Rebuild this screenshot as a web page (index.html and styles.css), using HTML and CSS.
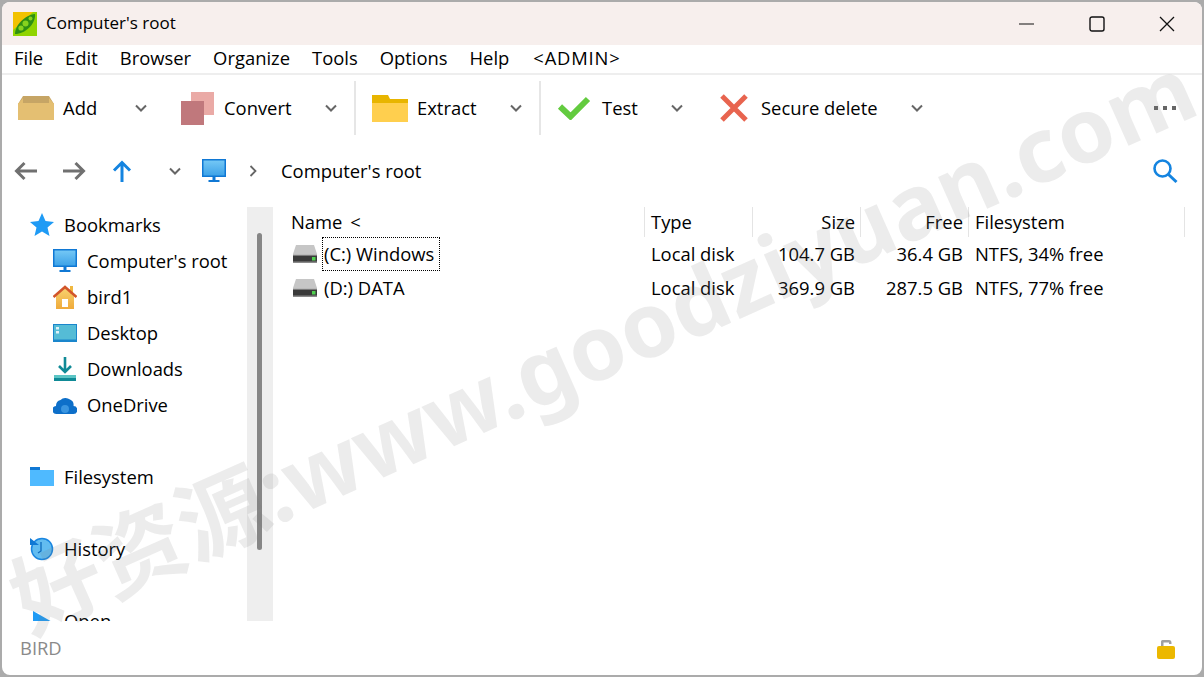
FILE: index.html
```html
<!DOCTYPE html>
<html lang="en">
<head>
<meta charset="utf-8">
<title>Computer's root</title>
<link rel="stylesheet" href="styles.css">
</head>
<body>
<svg class="defs" width="0" height="0" aria-hidden="true">
  <defs>
    <linearGradient id="screen" x1="0" y1="0" x2="0" y2="1"><stop offset="0" stop-color="#74c7f5"/><stop offset="1" stop-color="#3ea3e8"/></linearGradient>
    <linearGradient id="home" x1="0" y1="0" x2="0" y2="1"><stop offset="0" stop-color="#f8d270"/><stop offset="1" stop-color="#efaa3a"/></linearGradient>
    <symbol id="pc" viewBox="0 0 24 24">
      <rect x="0" y="0" width="24" height="18" fill="#1078d4"/>
      <rect x="1.5" y="1.5" width="21" height="15" fill="url(#screen)"/>
      <rect x="10.5" y="18" width="3" height="4" fill="#1078d4"/>
      <rect x="6.5" y="21" width="11" height="2" fill="#1078d4"/>
    </symbol>
    <symbol id="chev" viewBox="0 0 12 8">
      <path d="M1 1.500 6 6.500 11 1.500" fill="none" stroke="#666" stroke-width="2"/>
    </symbol>
    <symbol id="disk" viewBox="0 0 24 18">
      <path d="M3 0H21L24 9H0Z" fill="#c6c6c6"/>
      <rect x="0" y="9" width="24" height="9" fill="#3a3a3a"/>
      <rect x="0" y="9" width="24" height="1.5" fill="#bbb"/>
      <rect x="0" y="16.5" width="24" height="1.5" fill="#8a8a8a"/>
      <rect x="19" y="12" width="3.5" height="3.5" fill="#4fd04f"/>
    </symbol>
  </defs>
</svg>
<div class="window">
  <header class="titlebar">
    <svg class="logo" width="24" height="24" viewBox="0 0 24 24">
      <rect width="24" height="24" fill="#8fd400"/>
      <path d="M0 0H20L0 18Z" fill="#f2c200"/>
      <path d="M2 22C2 13 12 3 22 2 23 12 12 22 2 22Z" fill="#2f8f12"/>
      <circle cx="8" cy="16" r="2.6" fill="#86d21e"/>
      <circle cx="12.500" cy="11.500" r="3" fill="#86d21e"/>
      <circle cx="17.500" cy="6.500" r="2" fill="#86d21e"/>
    </svg>
    <span class="title-text">Computer's root</span>
    <div class="caption">
      <span class="cap-btn"><svg width="16" height="16" viewBox="0 0 16 16"><path d="M0 8H15" stroke="#111" stroke-width="1.2"/></svg></span>
      <span class="cap-btn"><svg width="16" height="16" viewBox="0 0 16 16"><rect x="1" y="1" width="14" height="14" rx="2" fill="none" stroke="#111" stroke-width="1.400"/></svg></span>
      <span class="cap-btn"><svg width="16" height="16" viewBox="0 0 16 16"><path d="M1 1 15 15M15 1 1 15" stroke="#111" stroke-width="1.300"/></svg></span>
    </div>
  </header>

  <nav class="menubar">
    <span>File</span><span>Edit</span><span>Browser</span><span>Organize</span><span>Tools</span><span>Options</span><span>Help</span><span class="admin">&lt;ADMIN&gt;</span>
  </nav>

  <div class="toolbar">
    <div class="tool tool-add">
      <svg class="tool-icon" width="36" height="24" viewBox="0 0 36 24"><path d="M5 0H31L36 8H0Z" fill="#c6a565"/><path d="M0 8 5 2V8ZM36 8 31 2V8Z" fill="#e2bd70"/><rect y="7" width="36" height="17" fill="#e4bf72"/></svg>
      <span class="tool-label">Add</span>
      <svg class="chev" width="12" height="8"><use href="#chev"/></svg>
    </div>
    <div class="tool tool-convert">
      <svg class="tool-icon" width="33" height="33" viewBox="0 0 33 33"><rect x="10" y="0" width="23" height="23" fill="#eaaaa6"/><rect x="0" y="9" width="23" height="24" fill="#c0787c"/></svg>
      <span class="tool-label">Convert</span>
      <svg class="chev" width="12" height="8"><use href="#chev"/></svg>
    </div>
    <i class="tool-sep"></i>
    <div class="tool tool-extract">
      <svg class="tool-icon" width="36" height="27" viewBox="0 0 36 27"><path d="M0 0H16L18 4H36V12H0Z" fill="#e8b500"/><rect y="8" width="36" height="19" fill="#ffcf4e"/></svg>
      <span class="tool-label">Extract</span>
      <svg class="chev" width="12" height="8"><use href="#chev"/></svg>
    </div>
    <i class="tool-sep"></i>
    <div class="tool tool-test">
      <svg class="tool-icon" width="34" height="24" viewBox="0 0 34 24"><path d="M3 10.500 13.500 20.500 31 3" fill="none" stroke="#63cb3f" stroke-width="6"/></svg>
      <span class="tool-label">Test</span>
      <svg class="chev" width="12" height="8"><use href="#chev"/></svg>
    </div>
    <div class="tool tool-delete">
      <svg class="tool-icon" width="28" height="28" viewBox="0 0 28 28"><path d="M2 2 26 26M26 2 2 26" stroke="#e8644f" stroke-width="5"/></svg>
      <span class="tool-label">Secure delete</span>
      <svg class="chev" width="12" height="8"><use href="#chev"/></svg>
    </div>
    <div class="tool-more"><i></i><i></i><i></i></div>
  </div>

  <div class="addressbar">
    <svg class="nav-back" width="24" height="20" viewBox="0 0 24 20"><path d="M23 10H3M10.500 2 2.500 10 10.500 18" fill="none" stroke="#707070" stroke-width="3"/></svg>
    <svg class="nav-forward" width="24" height="20" viewBox="0 0 24 20"><path d="M1 10H21M13.500 2 21.500 10 13.500 18" fill="none" stroke="#707070" stroke-width="3"/></svg>
    <svg class="nav-up" width="20" height="22" viewBox="0 0 20 22"><path d="M10 22V3M2 10.500 10 2.500 18 10.500" fill="none" stroke="#1484e0" stroke-width="3"/></svg>
    <svg class="chev nav-drop" width="12" height="8"><use href="#chev"/></svg>
    <svg class="nav-pc" width="24" height="24"><use href="#pc"/></svg>
    <svg class="nav-sep" width="8" height="12" viewBox="0 0 8 12"><path d="M1.500 1 6.500 6 1.500 11" fill="none" stroke="#666" stroke-width="1.800"/></svg>
    <span class="path">Computer's root</span>
    <svg class="nav-search" width="26" height="26" viewBox="0 0 26 26"><circle cx="10.500" cy="10.500" r="8" fill="none" stroke="#1484e0" stroke-width="2.600"/><path d="M16.500 16.500 24.500 24" stroke="#1484e0" stroke-width="3"/></svg>
  </div>

  <main class="panes">
    <aside class="sidebar">
      <div class="side-list">
        <div class="side-row">
          <svg width="24" height="24" viewBox="0 0 24 24"><path d="M12 0 15.500 8 24 9 17.500 14.500 19.500 23 12 18.500 4.500 23 6.500 14.500 0 9 8.500 8Z" fill="#1f9bf5"/></svg>
          <span>Bookmarks</span>
        </div>
        <div class="side-row child"><svg width="24" height="24"><use href="#pc"/></svg><span>Computer's root</span></div>
        <div class="side-row child">
          <svg width="24" height="24" viewBox="0 0 24 24"><path d="M3 11 12 3 21 11V24H3Z" fill="url(#home)"/><rect x="9" y="14" width="6" height="8" fill="#fff"/><rect x="17" y="1" width="3" height="8" fill="#f0b840"/><path d="M0.500 12 12 2 23.500 12" fill="none" stroke="#d2552a" stroke-width="2.600"/></svg>
          <span>bird1</span>
        </div>
        <div class="side-row child">
          <svg width="24" height="24" viewBox="0 0 24 24"><rect y="3" width="24" height="18" fill="#1a86cc"/><rect x="1" y="4" width="22" height="14.500" fill="#55bcd6"/><rect x="3" y="6" width="3" height="2.500" fill="#dff2f8"/><rect x="3" y="10" width="3" height="2.500" fill="#dff2f8"/></svg>
          <span>Desktop</span>
        </div>
        <div class="side-row child">
          <svg width="24" height="24" viewBox="0 0 24 24"><path d="M12 0V13M6 9 12 15 18 9" fill="none" stroke="#0f8a96" stroke-width="2.600"/><rect x="1" y="18" width="22" height="6" fill="#0f8a96"/><rect x="1" y="18" width="22" height="3" fill="#5cc5c5"/></svg>
          <span>Downloads</span>
        </div>
        <div class="side-row child">
          <svg width="24" height="24" viewBox="0 0 24 24"><path d="M4 21A4 4 0 0 1 3 13 6 6 0 0 1 7.500 7 7 7 0 0 1 17 6.500 6 6 0 0 1 20.500 13 4 4 0 0 1 20 21Z" fill="#0d6fc9"/><circle cx="12" cy="16" r="4" fill="#3a95e0"/></svg>
          <span>OneDrive</span>
        </div>
        <div class="side-row"></div>
        <div class="side-row">
          <svg width="24" height="24" viewBox="0 0 24 24"><path d="M0 2H10V5H0Z" fill="#1078d4"/><rect y="5" width="24" height="16" fill="#4fbaff"/></svg>
          <span>Filesystem</span>
        </div>
        <div class="side-row"></div>
        <div class="side-row">
          <svg width="24" height="24" viewBox="0 0 24 24"><circle cx="12" cy="12" r="10.500" fill="#62bcf0" stroke="#1a86e0" stroke-width="1.500"/><path d="M0 1 9 8H0Z" fill="#1078d4"/><path d="M11 5 11 14 8 16" fill="none" stroke="#0f6cbd" stroke-width="1.300"/></svg>
          <span>History</span>
        </div>
        <div class="side-row"></div>
        <div class="side-row">
          <svg width="24" height="24" viewBox="0 0 24 24"><path d="M3 2 24 14 3 24Z" fill="#1f9bf5"/></svg>
          <span>Open</span>
        </div>
      </div>
      <div class="scroll-track"><i class="scroll-thumb"></i></div>
    </aside>

    <section class="files">
      <div class="file-head">
        <span class="c-name">Name &lt;</span>
        <span class="c-type">Type</span>
        <span class="c-size">Size</span>
        <span class="c-free">Free</span>
        <span class="c-fs">Filesystem</span>
      </div>
      <div class="file-row">
        <span class="c-name"><svg class="disk" width="24" height="18"><use href="#disk"/></svg><span class="fname focus">(C:) Windows</span></span>
        <span class="c-type">Local disk</span>
        <span class="c-size">104.7 GB</span>
        <span class="c-free">36.4 GB</span>
        <span class="c-fs">NTFS, 34% free</span>
      </div>
      <div class="file-row">
        <span class="c-name"><svg class="disk" width="24" height="18"><use href="#disk"/></svg><span class="fname">(D:) DATA</span></span>
        <span class="c-type">Local disk</span>
        <span class="c-size">369.9 GB</span>
        <span class="c-free">287.5 GB</span>
        <span class="c-fs">NTFS, 77% free</span>
      </div>
    </section>
  </main>

  <footer class="statusbar">
    <span class="user">BIRD</span>
    <svg width="18" height="21" viewBox="0 0 18 21"><path d="M4 10V3.500Q4 2 5.500 2H12Q14.500 2 14.500 5V6H12V4.500H6.500V10Z" fill="#a0a0a0"/><rect y="8" width="18" height="13" rx="2" fill="#ecb800"/></svg>
  </footer>
</div>
<div class="watermark" aria-hidden="true">好资源:www.goodziyuan.com</div>
</body>
</html>
```

FILE: styles.css
```css
* { box-sizing: border-box; }
html, body { margin: 0; height: 100%; overflow: hidden; }
body {
  position: relative;
  width: 1204px;
  height: 677px;
  padding: 2px;
  background: #ababab;
  font-family: "Open Sans", "Noto Sans", sans-serif;
  font-size: 18.4px;
  line-height: 24px;
  color: #000;
}
.defs { position: absolute; }
svg { display: block; flex: none; }

.window {
  display: flex;
  flex-direction: column;
  height: 673px;
  background: #fff;
  border-radius: 8px;
  overflow: hidden;
}

.titlebar {
  display: flex;
  align-items: center;
  height: 43px;
  flex: none;
  padding-left: 11px;
  background: #f7efed;
}
.logo { margin-right: 9px; }
.title-text { flex: 1; font-size: 17px; padding-bottom: 1px; }
.caption { display: flex; }
.cap-btn {
  display: flex;
  align-items: center;
  justify-content: center;
  width: 70px;
  height: 43px;
}

.menubar {
  display: flex;
  gap: 22px;
  align-items: center;
  flex: none;
  height: 30px;
  padding: 0 0 2px 12px;
  border-bottom: 2px solid #eeeeee;
}
.admin { margin-left: 2px; letter-spacing: 0.8px; }

.toolbar {
  display: flex;
  align-items: center;
  flex: none;
  height: 66px;
  padding-left: 16px;
}
.tool { display: flex; align-items: center; flex: none; }
.tool-icon { margin-right: 9px; }
.tool-label { flex: 1; }
.tool-add { width: 163px; padding-right: 34px; }
.tool-convert { width: 173px; padding-right: 17px; }
.tool-convert .tool-icon { margin-right: 10px; }
.tool-extract { width: 167px; padding-right: 17px; }
.tool-test { width: 163px; padding-right: 37px; }
.tool-test .tool-icon { margin-right: 11px; }
.tool-delete { width: 203px; }
.tool-delete .tool-icon { margin-right: 13px; }
.tool-sep { flex: none; width: 2px; height: 54px; margin-right: 16px; background: #e6e6e6; }
.tool-more { display: flex; gap: 5px; margin-left: auto; margin-right: 26px; }
.tool-more i { width: 4px; height: 4px; background: #666; }

.addressbar {
  display: flex;
  align-items: center;
  flex: none;
  height: 60px;
  padding: 0 24px 0 12px;
}
.nav-forward { margin-left: 24px; }
.nav-up { margin-left: 26px; }
.nav-drop { margin-left: 37px; }
.nav-pc { margin-left: 21px; }
.nav-sep { margin-left: 23px; }
.path { margin-left: 24px; flex: 1; }

.panes {
  display: flex;
  flex: none;
  height: 414px;
  margin-top: 6px;
}
.sidebar {
  display: flex;
  flex: none;
  width: 271px;
  height: 414px;
  overflow: hidden;
}
.side-list { width: 245px; height: 414px; overflow: hidden; flex: none; }
.side-row {
  display: flex;
  align-items: center;
  gap: 10px;
  height: 36px;
  padding-left: 28px;
}
.side-row.child { padding-left: 51px; }
.scroll-track {
  flex: none;
  width: 26px;
  height: 414px;
  background: #eeeeee;
  padding: 26px 0 0 10px;
}
.scroll-thumb {
  display: block;
  width: 5px;
  height: 317px;
  border-radius: 3px;
  background: #868686;
}

.files { flex: 1; min-width: 0; }
.file-head, .file-row {
  display: grid;
  grid-template-columns: 372px 108px 108px 108px 216px;
}
.file-head { height: 30px; }
.file-row { height: 34px; align-items: center; }
.file-head span {
  display: flex;
  align-items: center;
  height: 30px;
  border-right: 1px solid #e4e4e4;
}
.file-head .c-name { padding-left: 18px; word-spacing: 3px; }
.file-head .c-size, .file-head .c-free { justify-content: flex-end; padding-right: 5px; }
.c-type { padding-left: 6px; }
.c-fs { padding-left: 6px; }
.file-row .c-size, .file-row .c-free { text-align: right; padding-right: 6px; }
.file-row .c-name { display: flex; align-items: center; padding-left: 20px; }
.disk { margin-right: 5px; }
.fname {
  display: flex;
  align-items: center;
  height: 34px;
  padding: 0 4px 0 1px;
  border: 1px dotted transparent;
}
.fname.focus { border-color: #000; padding-right: 5px; }

.statusbar {
  display: flex;
  align-items: center;
  justify-content: space-between;
  flex: 1;
  padding: 0 27px 0 18px;
  color: #8a8a8a;
}

.watermark {
  position: absolute;
  left: -50px;
  top: 292px;
  width: 1304px;
  text-align: center;
  font-family: "Noto Sans", "Noto Sans CJK SC", sans-serif;
  font-weight: 700;
  font-size: 90px;
  line-height: 100px;
  white-space: nowrap;
  color: rgba(120, 120, 120, 0.14);
  transform: rotate(-24deg);
  pointer-events: none;
}
```
